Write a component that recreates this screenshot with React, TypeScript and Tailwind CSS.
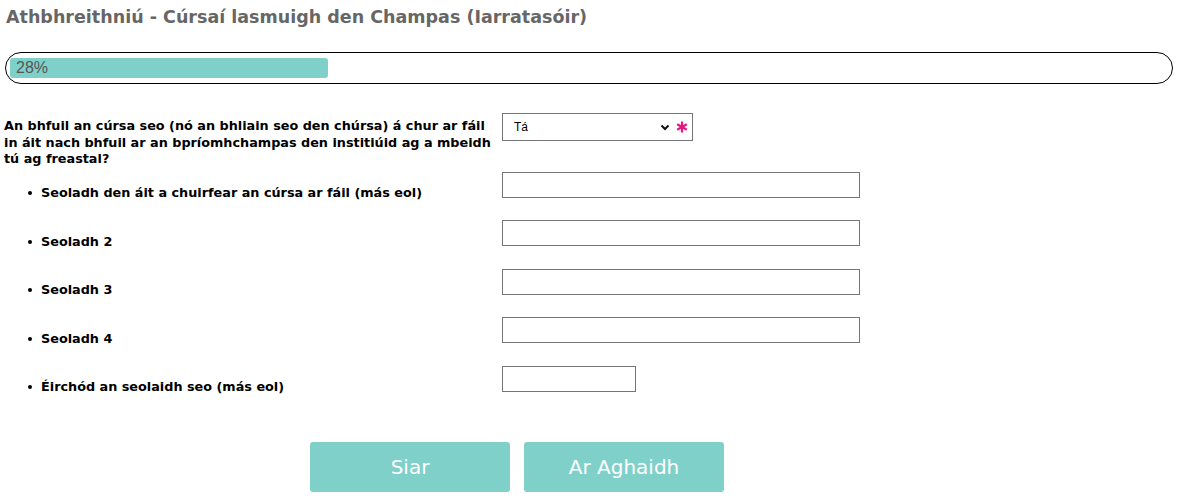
const rows = [
  { label: "Seoladh den áit a chuirfear an cúrsa ar fáil (más eol)", short: false },
  { label: "Seoladh 2", short: false },
  { label: "Seoladh 3", short: false },
  { label: "Seoladh 4", short: false },
  { label: "Éirchód an seolaidh seo (más eol)", short: true },
];

export default function App() {
  return (
    <div className="w-[1181px] h-[501px] bg-white text-black font-['DejaVu_Sans',Verdana,sans-serif] overflow-hidden">
      {/* Title */}
      <h1 className="pl-[6px] pt-[5px] text-[17.5px] leading-[24px] font-bold text-[#666666]">
        Athbhreithniú - Cúrsaí lasmuigh den Champas (Iarratasóir)
      </h1>

      {/* Progress */}
      <div className="mt-[23px] ml-[5px] w-[1168px] h-[32px] rounded-full border border-black flex items-center px-[4px]">
        <div className="w-[318px] h-[20px] rounded-[3px] bg-[#80d0ca] flex items-center pl-[6px] text-[16px] text-[#555555] font-['Liberation_Sans',Arial,sans-serif]">
          28%
        </div>
      </div>

      {/* Question */}
      <div className="mt-[29px] flex">
        <div className="w-[502px] pl-[4px] pr-[4px] pt-[5px] text-[12.8px] leading-[16.5px] font-bold">
          An bhfuil an cúrsa seo (nó an bhliain seo den chúrsa) á chur ar fáil in áit nach bhfuil ar an bpríomhchampas den institiúid ag a mbeidh tú ag freastal?
        </div>
        <div className="w-[191px] h-[28px] border border-[#767676] flex items-center pl-[11px] pr-[4px] text-[12px] font-['Liberation_Sans',Arial,sans-serif]">
          <span className="flex-1">Tá</span>
          <svg width="10" height="7" viewBox="0 0 10 7" className="mr-[6px]">
            <path d="M1.5 1.5 L5 5 L8.5 1.5" stroke="#111" strokeWidth="2" fill="none" />
          </svg>
          <svg width="12" height="12" viewBox="0 0 12 12">
            <g stroke="#e6177f" strokeWidth="2.2" strokeLinecap="butt">
              <line x1="6" y1="0.5" x2="6" y2="11.5" />
              <line x1="1.2" y1="3.2" x2="10.8" y2="8.8" />
              <line x1="1.2" y1="8.8" x2="10.8" y2="3.2" />
            </g>
          </svg>
        </div>
      </div>

      {/* Address rows */}
      <ul className="mt-[4px] flex flex-col gap-[22.5px]">
        {rows.map((r) => (
          <li key={r.label} className="flex h-[26px]">
            <div className="w-[502px] pl-[28px] pt-[17px] text-[12.8px] leading-[16px] font-bold flex items-center gap-[9px] whitespace-nowrap">
              <span className="w-[4px] h-[4px] rounded-full bg-black" />
              <span>{r.label}</span>
            </div>
            <div className={`${r.short ? "w-[134px]" : "w-[358px]"} h-[26px] border border-[#767676]`} />
          </li>
        ))}
      </ul>

      {/* Buttons */}
      <div className="mt-[50px] flex gap-[14px] pl-[310px]">
        <button className="w-[200px] h-[50px] rounded-[3px] bg-[#80d0ca] text-white text-[20px]">Siar</button>
        <button className="w-[200px] h-[50px] rounded-[3px] bg-[#80d0ca] text-white text-[20px]">Ar Aghaidh</button>
      </div>
    </div>
  );
}
